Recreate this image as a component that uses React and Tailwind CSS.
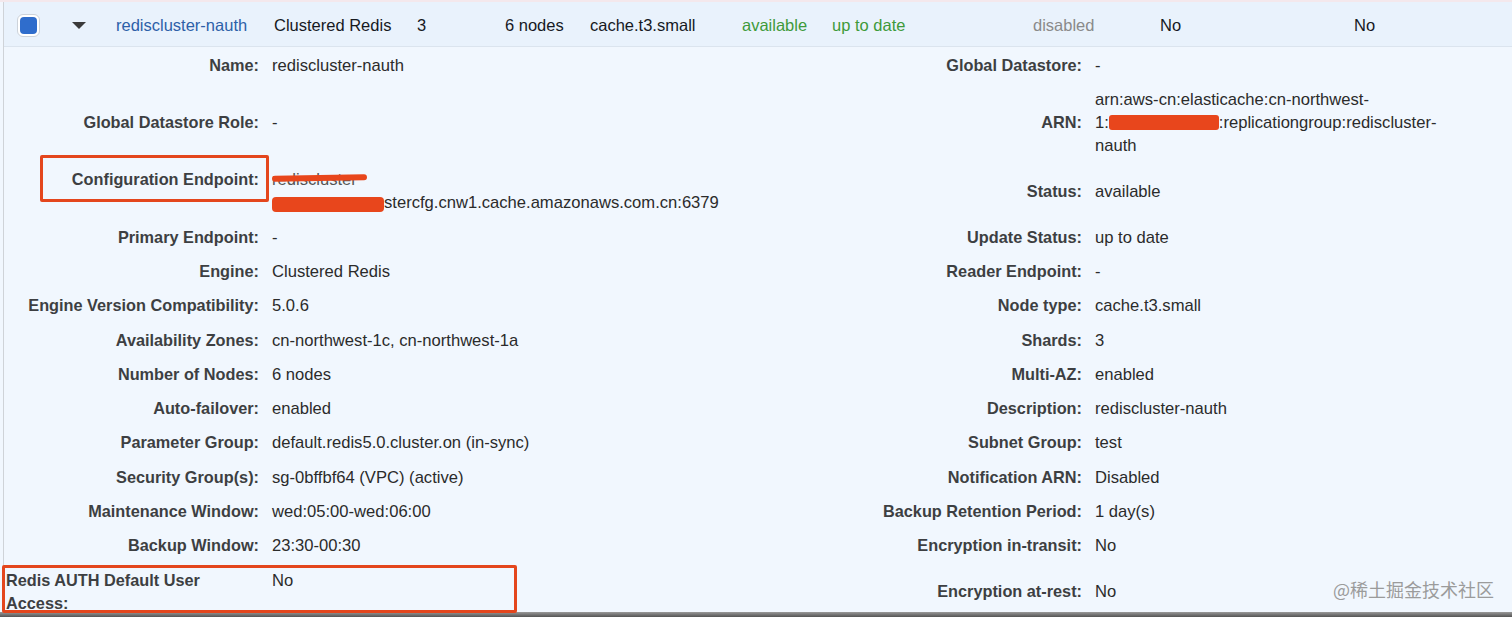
const rows = [
  { l: "Name:", lv: "rediscluster-nauth", r: "Global Datastore:", rv: "-" },
  { l: "Global Datastore Role:", lv: "-", r: "ARN:", rv: "arn" },
  { l: "Configuration Endpoint:", lv: "endpoint", r: "Status:", rv: "available", top: true },
  { l: "Primary Endpoint:", lv: "-", r: "Update Status:", rv: "up to date" },
  { l: "Engine:", lv: "Clustered Redis", r: "Reader Endpoint:", rv: "-" },
  { l: "Engine Version Compatibility:", lv: "5.0.6", r: "Node type:", rv: "cache.t3.small" },
  { l: "Availability Zones:", lv: "cn-northwest-1c, cn-northwest-1a", r: "Shards:", rv: "3" },
  { l: "Number of Nodes:", lv: "6 nodes", r: "Multi-AZ:", rv: "enabled" },
  { l: "Auto-failover:", lv: "enabled", r: "Description:", rv: "rediscluster-nauth" },
  { l: "Parameter Group:", lv: "default.redis5.0.cluster.on (in-sync)", r: "Subnet Group:", rv: "test" },
  { l: "Security Group(s):", lv: "sg-0bffbf64 (VPC) (active)", r: "Notification ARN:", rv: "Disabled" },
  { l: "Maintenance Window:", lv: "wed:05:00-wed:06:00", r: "Backup Retention Period:", rv: "1 day(s)" },
  { l: "Backup Window:", lv: "23:30-00:30", r: "Encryption in-transit:", rv: "No" },
];

const Value = ({ v }) => {
  if (v === "arn") {
    return (
      <div className="whitespace-nowrap">
        <div>arn:aws-cn:elasticache:cn-northwest-</div>
        <div className="flex items-center">
          1:
          <span className="inline-block w-[110px] h-[15px] bg-[#e8461c] rounded-[3px]" />
          :replicationgroup:rediscluster-
        </div>
        <div>nauth</div>
      </div>
    );
  }
  if (v === "endpoint") {
    return (
      <div className="whitespace-nowrap">
        <div className="relative w-fit">
          <span className="text-[#555]">rediscluster</span>
          <span className="absolute left-0 top-[7px] w-[95px] h-[6px] bg-[#e8461c] rounded-full rotate-[-1deg]" />
        </div>
        <div className="flex items-center">
          <span className="inline-block w-[112px] h-[15px] mt-[4px] bg-[#e8461c] rounded-[4px]" />
          stercfg.cnw1.cache.amazonaws.com.cn:6379
        </div>
      </div>
    );
  }
  return <div>{v}</div>;
};

const Header = () => (
  <div className="h-[45px] pt-[3px] border-b border-[#dbe4ee] bg-[#e9f2fc] grid grid-cols-[68px_44px_158px_143px_88px_85px_152px_90px_201px_127px_194px_1fr] items-center text-[16.5px] text-[#16191f] whitespace-nowrap">
    <div className="pl-[13px]">
      <div className="w-[23px] h-[23px] rounded-[6px] border border-[#cdd3da] bg-white p-[2px]">
        <div className="w-full h-full rounded-[4px] bg-[#2f6dcc]" />
      </div>
    </div>
    <div>
      <svg width="14" height="8" viewBox="0 0 14 8">
        <polygon points="0,0 14,0 7,7" fill="#3a3a3a" />
      </svg>
    </div>
    <div className="text-[#2d60a8]">rediscluster-nauth</div>
    <div>Clustered Redis</div>
    <div>3</div>
    <div>6 nodes</div>
    <div>cache.t3.small</div>
    <div className="text-[#3e9a3a]">available</div>
    <div className="text-[#3e9a3a]">up to date</div>
    <div className="text-[#8a8a8a]">disabled</div>
    <div>No</div>
    <div>No</div>
  </div>
);

export default function App() {
  return (
    <div className="relative w-[1512px] h-[617px] overflow-hidden flex flex-col bg-[#f1f7fe] font-['Liberation_Sans',Arial,sans-serif]">
      <div className="h-[2px] bg-[#f4e8ec]" />
      <div className="flex-1 min-h-0 overflow-hidden ml-[3px] border-l border-[#cfd3d8]">
        <Header />
        <div className="pt-[1px] grid grid-cols-[268px_598px_225px_1fr] items-center text-[16.6px] leading-[23px] text-[#2b2b2b]">
          {rows.map((row) => (
            <div key={row.l} className="contents">
              <div className={`py-[5.67px] pr-[13px] text-right text-[16.3px] font-bold text-[#3d3f42] whitespace-nowrap ${row.top ? "self-start" : ""}`}>{row.l}</div>
              <div className="py-[5.67px]"><Value v={row.lv} /></div>
              <div className="py-[5.67px] pr-[13px] text-right text-[16.3px] font-bold text-[#3d3f42] whitespace-nowrap">{row.r}</div>
              <div className="py-[5.67px]"><Value v={row.rv} /></div>
            </div>
          ))}
          <div className="py-[5.67px] pl-[2px] pr-[50px] text-[16.3px] font-bold text-[#3d3f42]">Redis AUTH Default User Access:</div>
          <div className="py-[5.67px] self-start">No</div>
          <div className="py-[5.67px] pr-[13px] text-right text-[16.3px] font-bold text-[#3d3f42] whitespace-nowrap">Encryption at-rest:</div>
          <div className="py-[5.67px]">No</div>
        </div>
      </div>
      <div className="h-[5px] bg-gradient-to-b from-[#9a9a9a] to-[#555]" />

      <div className="absolute left-[40px] top-[155px] w-[229px] h-[47px] border-[3px] border-[#e4461d] rounded-[2px]" />
      <div className="absolute left-[2px] top-[565px] w-[515px] h-[48px] border-[3px] border-[#e4461d] rounded-[2px]" />
      <div className="absolute left-[1333px] top-[577px] text-[18px] text-[#9b9b9b] font-['Noto_Sans_CJK_SC',sans-serif] leading-[24px]">
        @稀土掘金技术社区
      </div>
    </div>
  );
}
